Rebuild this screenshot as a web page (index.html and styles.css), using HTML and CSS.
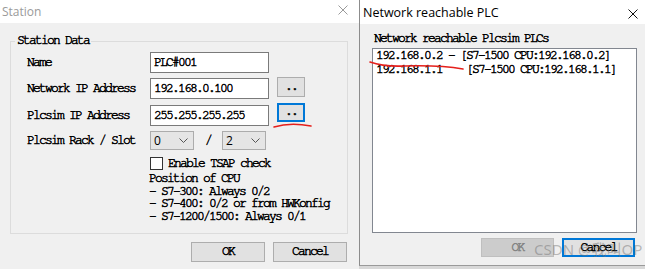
FILE: index.html
```html
<!DOCTYPE html>
<html lang="en">
<head>
  <meta charset="UTF-8" />
  <title>Station</title>
  <link rel="stylesheet" href="styles.css">
</head>
<body>
  <div class="screen">
    <div class="dlg station">
      <div class="titlebar">
        <span class="title">Station</span>
        <svg class="close" width="10" height="10" viewBox="0 0 10 10"><path d="M0.5 0.5 L9.5 9.5 M9.5 0.5 L0.5 9.5" stroke="#9a9a9a" stroke-width="1"/></svg>
      </div>

      <fieldset class="group">
        <legend>Station Data</legend>
        <div class="row">
          <span class="lbl">Name</span>
          <div class="edit">PLC#001</div>
        </div>
        <div class="row gap5">
          <span class="lbl">Network IP Address</span>
          <div class="edit">192.168.0.100</div>
          <div class="more">..</div>
        </div>
        <div class="row gap6">
          <span class="lbl">Plcsim IP Address</span>
          <div class="edit">255.255.255.255</div>
          <div class="more focus">..</div>
        </div>
        <div class="row rack">
          <span class="lbl">Plcsim Rack / Slot</span>
          <div class="combo"><span>0</span><svg width="9" height="5" viewBox="0 0 9 5"><path d="M0.5 0.5 L4.5 4.5 L8.5 0.5" fill="none" stroke="#555"/></svg></div>
          <span class="slash">/</span>
          <div class="combo"><span>2</span><svg width="9" height="5" viewBox="0 0 9 5"><path d="M0.5 0.5 L4.5 4.5 L8.5 0.5" fill="none" stroke="#555"/></svg></div>
        </div>
        <div class="check">
          <span class="box"></span>
          <span>Enable TSAP check</span>
        </div>
        <div class="info">Position of CPU
- S7-300: Always 0/2
- S7-400: 0/2 or from HWKonfig
- S7-1200/1500: Always 0/1</div>
      </fieldset>

      <div class="actions">
        <div class="btn ok">OK</div>
        <div class="btn">Cancel</div>
      </div>
    </div>

    <div class="dlg reach">
      <div class="titlebar">
        <span class="title">Network reachable PLC</span>
        <svg class="close" width="10" height="10" viewBox="0 0 10 10"><path d="M0.5 0.5 L9.5 9.5 M9.5 0.5 L0.5 9.5" stroke="#111" stroke-width="1"/></svg>
      </div>
      <div class="lst-label">Network reachable Plcsim PLCs</div>
      <div class="listbox">192.168.0.2 - [S7-1500 CPU:192.168.0.2]
192.168.1.1    [S7-1500 CPU:192.168.1.1]</div>
      <div class="actions">
        <div class="btn disabled">OK</div>
        <div class="btn focus">Cancel</div>
      </div>
    </div>

    <svg class="marks" width="645" height="269" viewBox="0 0 645 269">
      <path d="M274 127 Q290 122 311 126" fill="none" stroke="#e5201c" stroke-width="1.5" stroke-linecap="round"/>
      <path d="M370 62 Q384 67 405 66 Q440 65 463 69" fill="none" stroke="#e5201c" stroke-width="1.6" stroke-linecap="round"/>
    </svg>
    <div class="watermark">CSDN @我叫OP</div>
  </div>
</body>
</html>
```

FILE: styles.css
```css
body {
  margin: 0;
  background: #d8d8d8;
  font-family: FreeMono, "Liberation Mono", monospace;
  font-size: 13px;
  letter-spacing: -1.8px;
  color: #000;
  -webkit-text-stroke: 0.5px #000;
}

.screen {
  position: relative;
  display: flex;
  width: 645px;
  height: 269px;
  overflow: hidden;
}

.dlg {
  background: #f0f0f0;
  box-sizing: border-box;
}

.station {
  width: 359px;
  flex: none;
  height: 269px;
}

.titlebar {
  background: #fff;
  height: 23px;
  display: flex;
  align-items: center;
  justify-content: space-between;
}

.title {
  font-family: "Open Sans", sans-serif;
  font-size: 12px;
  letter-spacing: 0;
  color: #9a9a9a;
  padding-left: 2px;
  -webkit-text-stroke: 0;
}

.station .close {
  margin-right: 11px;
  margin-top: -3px;
}

.group {
  box-sizing: border-box;
  width: 338px;
  margin: 11px 0 0 10px;
  border: 1px solid #dcdcdc;
  padding: 4px 0 10px 16px;
}

.group legend {
  padding: 0 2px;
  margin-left: -12px;
  line-height: 14px;
}

.row {
  display: flex;
  align-items: flex-start;
  height: 21px;
}

.gap5 { margin-top: 5px; }
.gap6 { margin-top: 6px; }

.lbl {
  width: 123px;
  flex: none;
  line-height: 21px;
}

.edit {
  box-sizing: border-box;
  width: 119px;
  height: 21px;
  border: 1px solid #7a7a7a;
  background: #fff;
  padding-left: 3px;
  line-height: 19px;
}

.more {
  box-sizing: border-box;
  width: 28px;
  height: 20px;
  margin: -1px 0 0 8px;
  background: #e1e1e1;
  border: 1px solid #adadad;
  text-align: center;
  line-height: 17px;
}

.more.focus {
  border: 2px solid #0078d7;
  height: 19px;
  margin-top: -2px;
  line-height: 14px;
}

.rack {
  margin-top: 5px;
  height: 19px;
}

.rack .lbl {
  line-height: 19px;
}

.combo {
  box-sizing: border-box;
  width: 44px;
  height: 19px;
  background: #e5e5e5;
  border: 1px solid #acacac;
  display: flex;
  align-items: center;
  justify-content: space-between;
  padding: 0 5px 0 3px;
  font-family: "Open Sans", sans-serif;
  font-size: 12px;
  letter-spacing: 0;
  -webkit-text-stroke: 0;
}

.slash {
  width: 28px;
  text-align: center;
  line-height: 19px;
}

.check {
  display: flex;
  align-items: center;
  margin: 7px 0 0 123px;
  height: 13px;
}

.box {
  box-sizing: border-box;
  width: 13px;
  height: 13px;
  border: 1px solid #333;
  background: #fff;
  margin-right: 5px;
}

.info {
  white-space: pre;
  margin: 3px 0 0 122px;
  line-height: 12.5px;
}

.actions {
  display: flex;
  justify-content: flex-end;
  gap: 8px;
}

.station .actions {
  margin: 8px 12px 0 0;
}

.btn {
  box-sizing: border-box;
  width: 74px;
  height: 20px;
  background: #e1e1e1;
  border: 1px solid #adadad;
  text-align: center;
  line-height: 18px;
}

.reach {
  flex: 1;
  height: 266px;
  border-left: 1px solid #8c8c8c;
  border-bottom: 1px solid #9a9a9a;
}

.reach .titlebar {
  height: 24px;
}

.reach .title {
  color: #000;
  font-size: 12.5px;
  padding-left: 3px;
  margin-top: 1px;
}

.reach .close {
  margin-right: 7px;
  margin-top: 3px;
}

.lst-label {
  margin: 8px 0 0 14px;
  line-height: 14px;
}

.listbox {
  box-sizing: border-box;
  width: 265px;
  height: 185px;
  margin: 2px 0 0 12px;
  background: #fff;
  border: 1px solid #828790;
  padding: 0 3px;
  white-space: pre;
  line-height: 14px;
}

.reach .actions {
  margin: 5px 10px 0 0;
}

.reach .btn {
  width: 73px;
  height: 19px;
  line-height: 17px;
}

.btn.disabled {
  background: #cccccc;
  border-color: #bfbfbf;
  color: #838383;
  -webkit-text-stroke: 0.5px #838383;
}

.btn.focus {
  border: 2px solid #0078d7;
  line-height: 15px;
}

.marks {
  position: absolute;
  left: 0;
  top: 0;
  pointer-events: none;
}

.watermark {
  position: absolute;
  left: 534px;
  top: 238px;
  font-family: "Noto Sans", "Noto Sans CJK SC", sans-serif;
  font-size: 15px;
  letter-spacing: 0;
  color: rgba(110, 110, 110, 0.45);
  -webkit-text-stroke: 0;
}
```
